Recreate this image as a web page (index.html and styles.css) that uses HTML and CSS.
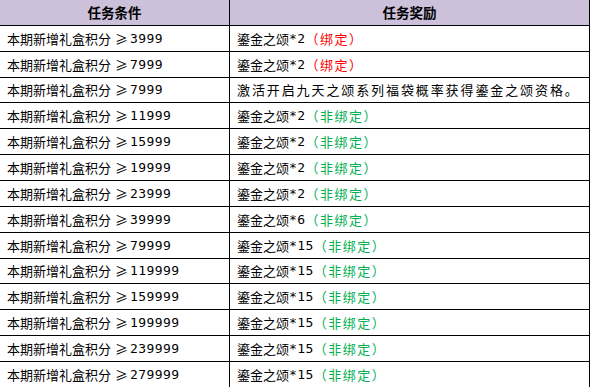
FILE: index.html
```html
<!DOCTYPE html>
<html lang="zh">
<head>
<meta charset="utf-8">
<link rel="stylesheet" href="styles.css">
</head>
<body>
<div class="grid">
  <div class="cell head">任务条件</div><div class="cell head">任务奖励</div>
  <div class="cell">本期新增礼盒积分<span class="ge">≥</span><span class="num">3999</span></div><div class="cell">鎏金之颂<span class="num">*2</span><span class="red">（绑定）</span></div>
  <div class="cell">本期新增礼盒积分<span class="ge">≥</span><span class="num">7999</span></div><div class="cell">鎏金之颂<span class="num">*2</span><span class="red">（绑定）</span></div>
  <div class="cell">本期新增礼盒积分<span class="ge">≥</span><span class="num">7999</span></div><div class="cell wide">激活开启九天之颂系列福袋概率获得鎏金之颂资格。</div>
  <div class="cell">本期新增礼盒积分<span class="ge">≥</span><span class="num">11999</span></div><div class="cell">鎏金之颂<span class="num">*2</span><span class="green">（非绑定）</span></div>
  <div class="cell">本期新增礼盒积分<span class="ge">≥</span><span class="num">15999</span></div><div class="cell">鎏金之颂<span class="num">*2</span><span class="green">（非绑定）</span></div>
  <div class="cell">本期新增礼盒积分<span class="ge">≥</span><span class="num">19999</span></div><div class="cell">鎏金之颂<span class="num">*2</span><span class="green">（非绑定）</span></div>
  <div class="cell">本期新增礼盒积分<span class="ge">≥</span><span class="num">23999</span></div><div class="cell">鎏金之颂<span class="num">*2</span><span class="green">（非绑定）</span></div>
  <div class="cell">本期新增礼盒积分<span class="ge">≥</span><span class="num">39999</span></div><div class="cell">鎏金之颂<span class="num">*6</span><span class="green">（非绑定）</span></div>
  <div class="cell">本期新增礼盒积分<span class="ge">≥</span><span class="num">79999</span></div><div class="cell">鎏金之颂<span class="num">*15</span><span class="green">（非绑定）</span></div>
  <div class="cell">本期新增礼盒积分<span class="ge">≥</span><span class="num">119999</span></div><div class="cell">鎏金之颂<span class="num">*15</span><span class="green">（非绑定）</span></div>
  <div class="cell">本期新增礼盒积分<span class="ge">≥</span><span class="num">159999</span></div><div class="cell">鎏金之颂<span class="num">*15</span><span class="green">（非绑定）</span></div>
  <div class="cell">本期新增礼盒积分<span class="ge">≥</span><span class="num">199999</span></div><div class="cell">鎏金之颂<span class="num">*15</span><span class="green">（非绑定）</span></div>
  <div class="cell">本期新增礼盒积分<span class="ge">≥</span><span class="num">239999</span></div><div class="cell">鎏金之颂<span class="num">*15</span><span class="green">（非绑定）</span></div>
  <div class="cell">本期新增礼盒积分<span class="ge">≥</span><span class="num">279999</span></div><div class="cell">鎏金之颂<span class="num">*15</span><span class="green">（非绑定）</span></div>
</div>
</body>
</html>
```
FILE: styles.css
```css
html, body {
  margin: 0;
  padding: 0;
  background: #fff;
  overflow: hidden;
}
.grid {
  display: grid;
  grid-template-columns: 229px 359px;
  grid-template-rows: repeat(15, 1fr);
  gap: 1px;
  height: 386.75px;
  width: 589px;
  padding-right: 1px;
  background: #000;
  font-family: "Noto Sans CJK SC", sans-serif;
  font-size: 13px;
  color: #000;
}
.cell {
  background: #fff;
  display: flex;
  align-items: center;
  padding-left: 7px;
  white-space: nowrap;
  overflow: hidden;
  line-height: 1;
}
.head {
  background: #ccc0da;
  justify-content: center;
  padding-left: 0;
  font-weight: bold;
  font-size: 13.5px;
}
.ge {
  margin-left: 4px;
  margin-right: 2px;
}
.num {
  font-family: "DejaVu Sans Mono", monospace;
  font-size: 13px;
  letter-spacing: 0.4px;
}
.wide {
  letter-spacing: 1.9px;
}
.red, .green {
  letter-spacing: 1.5px;
}
.red { color: #ff0000; }
.green { color: #00b050; }
```
